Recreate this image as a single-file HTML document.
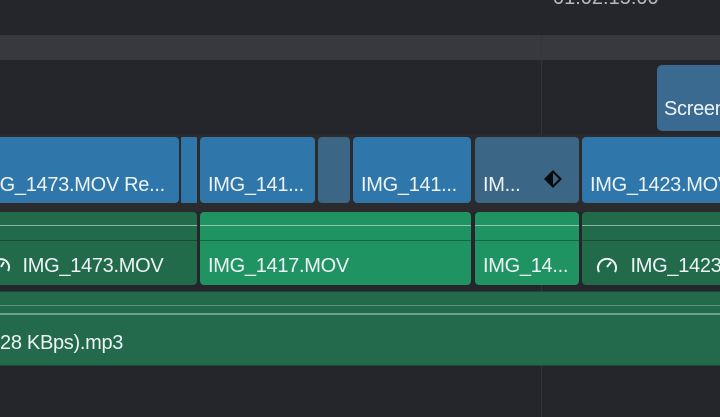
<!DOCTYPE html>
<html><head><style>
*{margin:0;padding:0;box-sizing:border-box}
body{width:720px;height:417px;background:#25262b;position:relative;overflow:hidden;font-family:"Liberation Sans","DejaVu Sans",sans-serif;color:#eef3f6}
.a{position:absolute}
.v{position:absolute;top:137px;height:66px;background:#2f76aa;border-radius:4px;font-size:20px;line-height:22px;padding:37px 0 0 8px;white-space:nowrap;overflow:hidden;letter-spacing:-0.3px}
.d{background:#3c6685}
.g{position:absolute;top:212px;height:73px;border-radius:4px;overflow:hidden;white-space:nowrap;font-size:20px;letter-spacing:-0.3px}
.g .w{position:absolute;left:0;right:0;top:13px;height:1px;background:rgba(230,240,235,.55)}
.g .s{position:absolute;left:0;right:0;top:28px;height:1px;background:rgba(0,0,0,.3)}
.g .t{position:absolute;top:43px;left:8px;line-height:22px}
.dk{background:#216b4a}
.br{background:#1f9462}
</style></head><body>
<div class="a" style="left:553px;top:-12px;font-size:20px;line-height:20px;color:#b8b9bd">01:02:15:00</div>
<div class="a" style="left:0;top:35px;width:720px;height:25px;background:#38393e"></div>
<div class="a" style="left:541px;top:35px;width:1px;height:382px;background:#34353a"></div>
<div class="a" style="left:657px;top:65px;width:70px;height:66px;background:#3b6a91;border-radius:5px;font-size:20px;padding:33px 0 0 7px;letter-spacing:-0.3px">Screen</div>
<div class="a" style="left:0;top:134px;width:720px;height:78px;background:#2b2a2d"></div>
<div class="v" style="left:-30px;width:209px;padding-left:8px">IMG_1473.MOV Re...</div>
<div class="v" style="left:181px;width:16px;border-radius:1px;padding:0"></div>
<div class="v" style="left:200px;width:115px">IMG_141...</div>
<div class="v d" style="left:318px;width:32px;padding:0"></div>
<div class="v" style="left:353px;width:118px">IMG_141...</div>
<div class="v d" style="left:475px;width:104px">IM...</div>
<div class="a" style="left:543px;top:169px;width:20px;height:20px"><svg width="20" height="20" viewBox="0 0 20 20"><path d="M10 1L19 10L10 19L1 10Z" fill="#0b0b0d"/><path d="M10 4L16 10L10 16Z" fill="#3c6685"/></svg></div>
<div class="v" style="left:582px;width:150px">IMG_1423.MOV</div>
<div class="g dk" style="left:-8px;width:205px"><div class="w"></div><div class="s"></div><div class="t" style="left:-2px"><svg width="22" height="20" viewBox="0 0 22 20" style="vertical-align:-3px"><path d="M4 16A8 8 0 1 1 18 16" fill="none" stroke="#eef3f6" stroke-width="2"/><path d="M11 12L14 7" stroke="#eef3f6" stroke-width="2"/></svg>&nbsp; IMG_1473.MOV</div></div>
<div class="g br" style="left:200px;width:271px"><div class="w"></div><div class="s"></div><div class="t">IMG_1417.MOV</div></div>
<div class="g br" style="left:475px;width:104px"><div class="w"></div><div class="s"></div><div class="t">IMG_14...</div></div>
<div class="g dk" style="left:582px;width:150px"><div class="w"></div><div class="s"></div><div class="t" style="left:12px"><svg width="26" height="20" viewBox="0 0 26 20" style="vertical-align:-3px"><path d="M5 17A9 9 0 1 1 21 17" fill="none" stroke="#eef3f6" stroke-width="2"/><path d="M13 12L17 7" stroke="#eef3f6" stroke-width="2"/></svg>&nbsp; IMG_1423.MOV</div></div>
<div class="a" style="left:-5px;top:291px;width:730px;height:75px;background:#226a4b;border:1px solid #1a4a35;border-radius:3px"></div>
<div class="a" style="left:0;top:305px;width:720px;height:1px;background:rgba(200,230,215,.35)"></div>
<div class="a" style="left:0;top:313px;width:720px;height:2px;background:rgba(200,230,215,.45)"></div>
<div class="a" style="left:0;top:332px;font-size:20px;letter-spacing:-0.3px">28 KBps).mp3</div>
</body></html>
